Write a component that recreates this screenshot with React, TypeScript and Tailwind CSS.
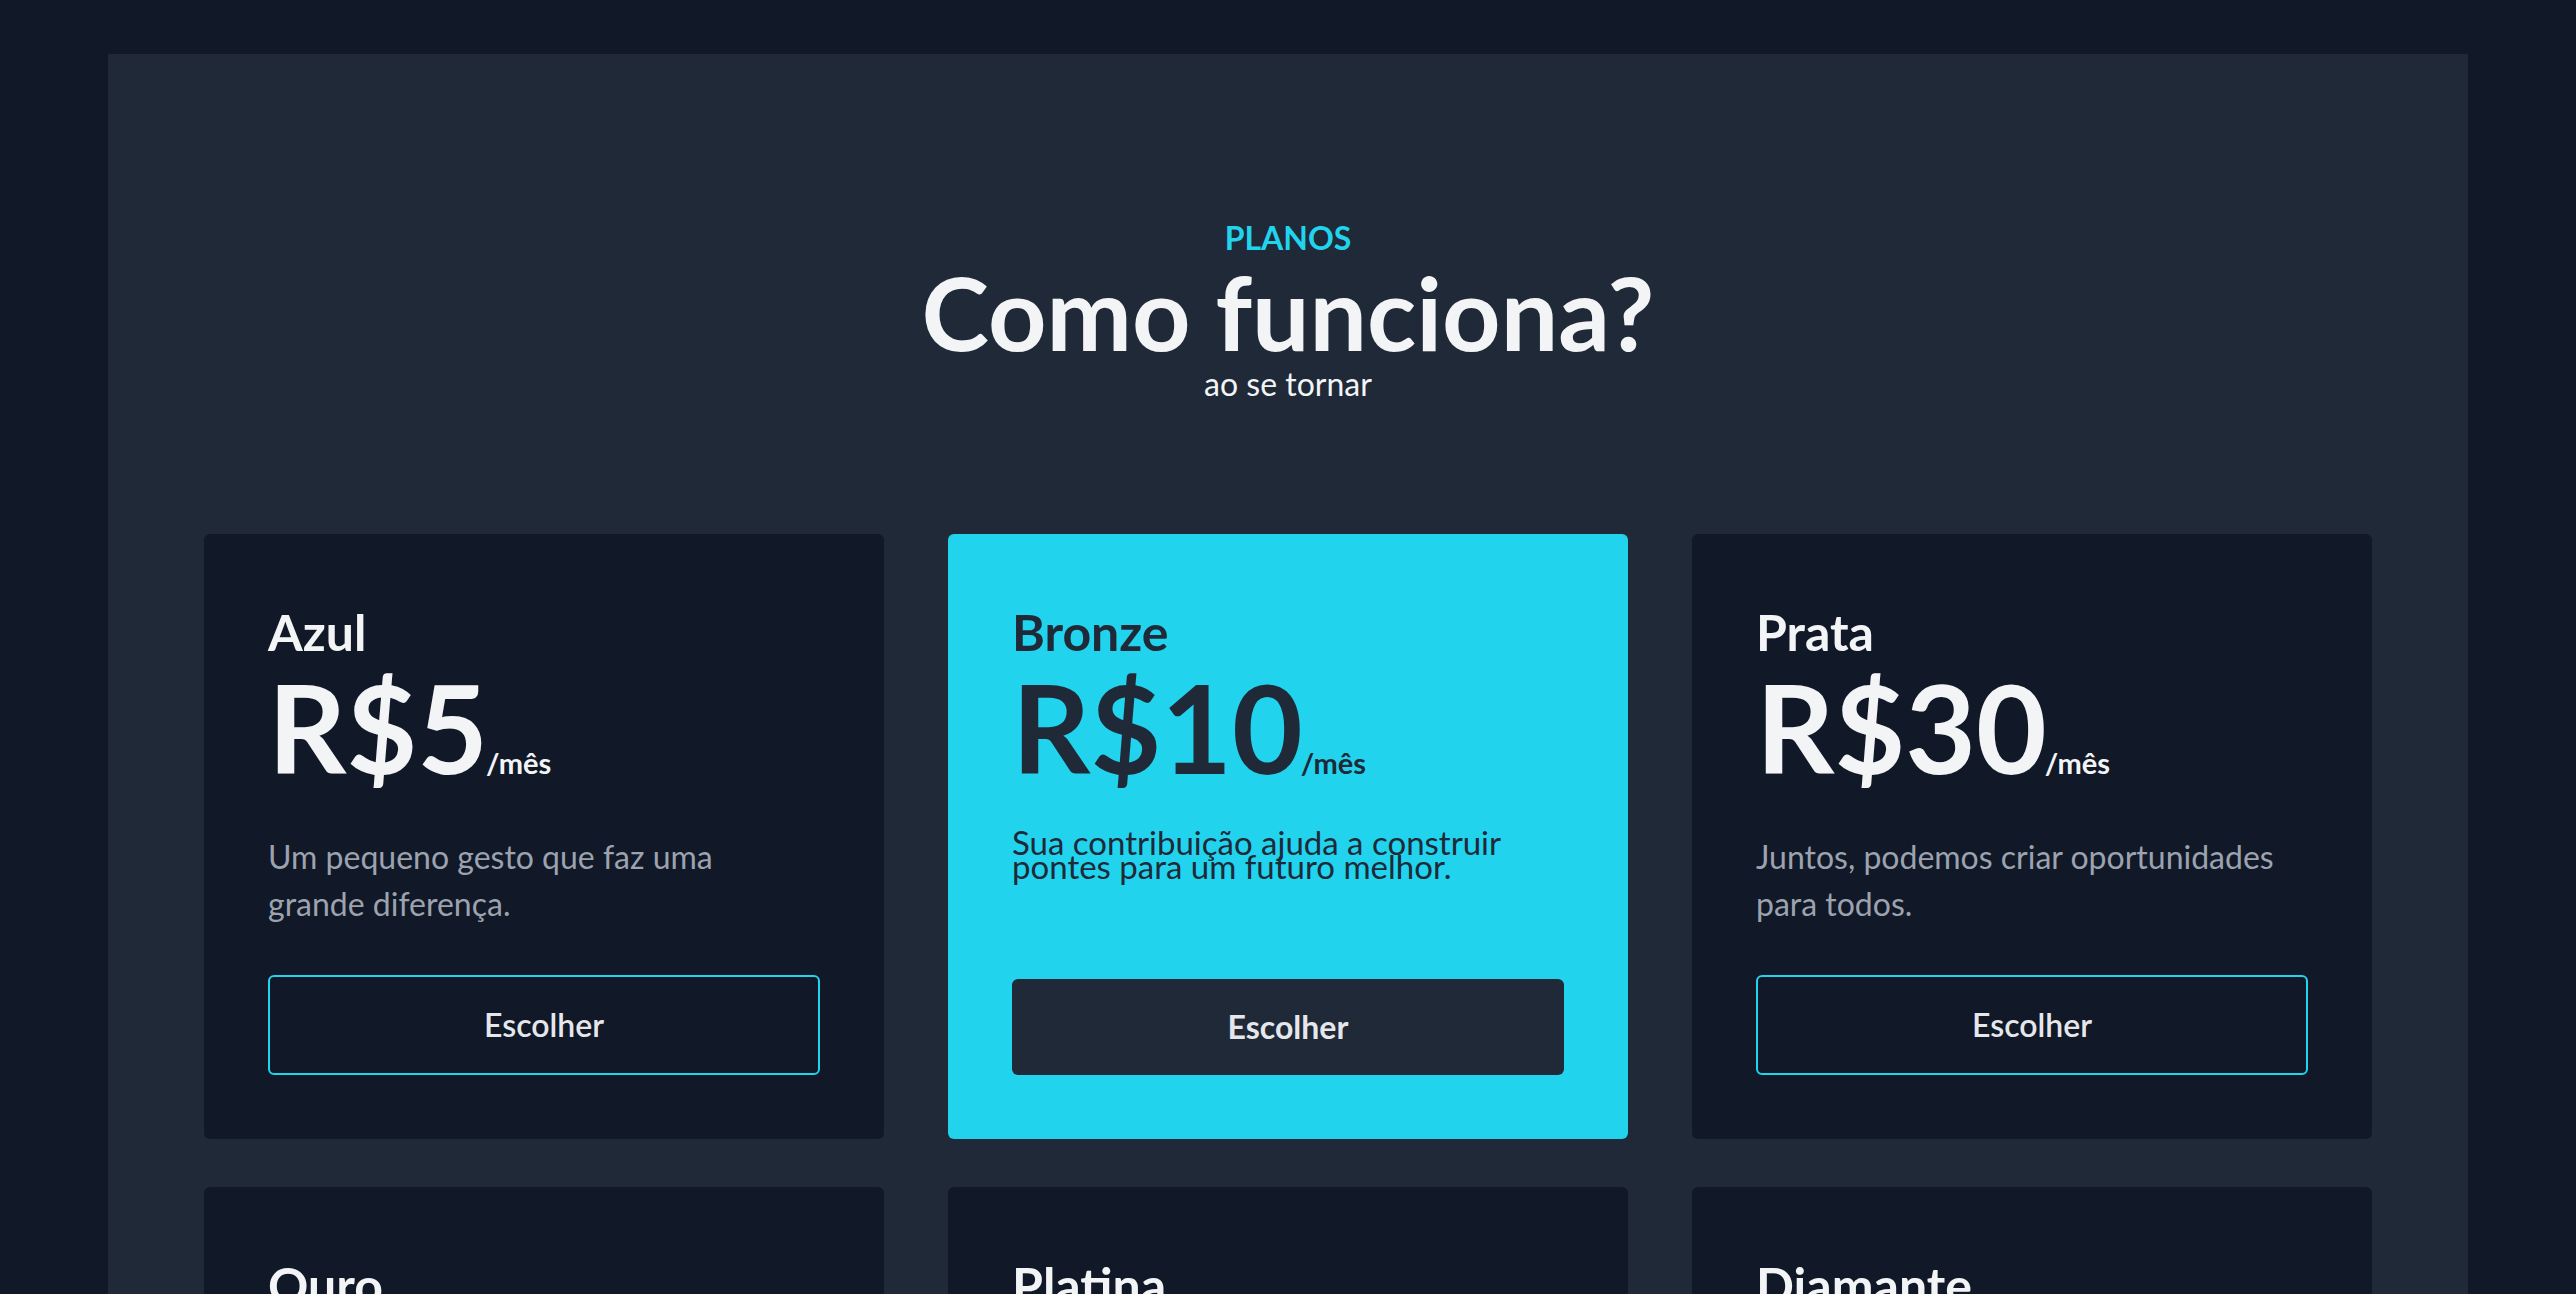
import React from 'react';

const plans = [
  { name: 'Azul', price: 'R$5', text: 'Um pequeno gesto que faz uma grande diferença.' },
  { name: 'Bronze', price: 'R$10', text: 'Sua contribuição ajuda a construir pontes para um futuro melhor.', featured: true },
  { name: 'Prata', price: 'R$30', text: 'Juntos, podemos criar oportunidades para todos.' },
  { name: 'Ouro', price: 'R$50', text: 'Seu apoio transforma vidas e fortalece a comunidade.' },
  { name: 'Platina', price: 'R$100', text: 'Um compromisso real com a mudança que queremos ver.' },
  { name: 'Diamante', price: 'R$200', text: 'O maior impacto para quem acredita no nosso propósito.' },
];

const App = () => {
  return (
    <div className="min-h-screen bg-[#111827] px-[108px] pt-[54px] font-['Lato','Noto_Sans',sans-serif]">
      <section className="bg-[#1f2937] px-[96px] pt-[164px] pb-[96px]">
        <div className="text-center">
          <p className="text-[32px] leading-[40px] font-bold text-[#22d3ee]">PLANOS</p>
          <h2 className="text-[102px] leading-[108px] font-bold text-[#f3f4f6]">Como funciona?</h2>
          <p className="text-[32px] leading-[36px] text-[#f3f4f6]">ao se tornar</p>
        </div>

        <div className="mt-[132px] grid grid-cols-3 gap-x-[64px] gap-y-[48px]">
          {plans.map((plan) => (
            <div
              key={plan.name}
              className={`flex flex-col rounded-md p-[64px] ${plan.featured ? 'bg-[#22d3ee]' : 'bg-[#111827]'}`}
            >
              <h3 className={`mt-[4px] text-[50px] leading-[60px] font-bold ${plan.featured ? 'text-[#1f2937]' : 'text-[#f3f4f6]'}`}>
                {plan.name}
              </h3>
              <div className={`mt-[5px] flex items-baseline ${plan.featured ? 'text-[#1f2937]' : 'text-[#f3f4f6]'}`}>
                <span className="text-[122px] leading-[120px] font-bold">{plan.price}</span>
                <span className="ml-[-2px] text-[29px] font-bold">/mês</span>
              </div>
              {plan.featured ? (
                <p className="mt-[43px] mb-[48px] pr-[30px] text-[33px] leading-[24px] text-[#1f2937]">{plan.text}</p>
              ) : (
                <p className="mt-[46px] mb-[48px] pr-[30px] text-[32px] leading-[47px] text-[#9ca3af]">{plan.text}</p>
              )}
              {plan.featured ? (
                <button className="mt-auto h-[96px] w-full rounded-md bg-[#1f2937] text-[32px] font-bold text-[#e5e7eb]">
                  Escolher
                </button>
              ) : (
                <button className="mt-auto h-[100px] w-full rounded-md border-2 border-[#22d3ee] text-[32px] font-semibold text-[#e5e7eb]">
                  Escolher
                </button>
              )}
            </div>
          ))}
        </div>
      </section>
    </div>
  );
};

export default App;
